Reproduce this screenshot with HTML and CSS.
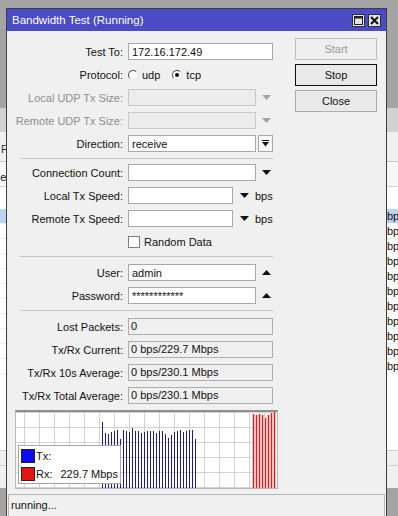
FILE: index.html
```html
<!DOCTYPE html>
<html lang="en">
<head>
  <meta charset="UTF-8">
  <meta name="viewport" content="width=device-width, initial-scale=1.0">
  <title>Bandwidth Test</title>
  <link rel="stylesheet" href="styles.css">
</head>
<body>
  <!-- window behind the dialog -->
  <div class="bg-window">
    <div class="bg-toolbar"></div>
    <div class="bg-tabs">F</div>
    <div class="bg-head"><span>Sec</span></div>
    <div class="bg-list">
      <div class="bg-row selected"><span></span><span>bps</span></div>
      <div class="bg-row"><span></span><span>bps</span></div>
      <div class="bg-row"><span></span><span>bps</span></div>
      <div class="bg-row"><span></span><span>bps</span></div>
      <div class="bg-row"><span></span><span>bps</span></div>
      <div class="bg-row"><span></span><span>bps</span></div>
      <div class="bg-row"><span></span><span>bps</span></div>
      <div class="bg-row"><span></span><span>bps</span></div>
      <div class="bg-row"><span></span><span>bps</span></div>
      <div class="bg-row"><span></span><span>bps</span></div>
      <div class="bg-row"><span></span><span>bps</span></div>
    </div>
    <div class="bg-foot"></div>
    <div class="bg-foot"></div>
  </div>

  <div class="dialog">
    <div class="titlebar">
      <span class="title">Bandwidth Test (Running)</span>
      <span class="title-btn">
        <svg width="9" height="9" viewBox="0 0 9 9"><rect x="0.5" y="0.5" width="8" height="8" fill="none" stroke="#222"/><path d="M0 1.5h9" stroke="#222" stroke-width="2"/></svg>
      </span>
      <span class="title-btn">
        <svg width="9" height="9" viewBox="0 0 9 9"><path d="M1 1l7 7M8 1l-7 7" stroke="#111" stroke-width="2"/></svg>
      </span>
    </div>

    <div class="dialog-body">
      <div class="form">
        <div class="row">
          <label class="label" for="testTo">Test To:</label>
          <input class="field w-full" id="testTo" type="text" value="172.16.172.49">
        </div>
        <div class="row">
          <span class="label">Protocol:</span>
          <span class="radio"></span><span class="opt">udp</span>
          <span class="radio on"></span><span class="opt">tcp</span>
        </div>
        <div class="row disabled">
          <span class="label">Local UDP Tx Size:</span>
          <input class="field w-mid" type="text" disabled>
          <span class="caret muted"></span>
        </div>
        <div class="row disabled">
          <span class="label">Remote UDP Tx Size:</span>
          <input class="field w-mid" type="text" disabled>
          <span class="caret muted"></span>
        </div>
        <div class="row">
          <label class="label" for="direction">Direction:</label>
          <input class="field w-mid" id="direction" type="text" value="receive">
          <span class="drop">
            <svg width="7" height="7" viewBox="0 0 7 7"><path d="M0 0.5h7" stroke="#111"/><path d="M0 2h7L3.5 6.5z" fill="#111"/></svg>
          </span>
        </div>

        <div class="sep top"></div>

        <div class="row">
          <label class="label" for="connCount">Connection Count:</label>
          <input class="field w-mid" id="connCount" type="text">
          <span class="caret"></span>
        </div>
        <div class="row">
          <label class="label" for="localSpeed">Local Tx Speed:</label>
          <input class="field w-short" id="localSpeed" type="text">
          <span class="caret"></span>
          <span class="unit">bps</span>
        </div>
        <div class="row">
          <label class="label" for="remoteSpeed">Remote Tx Speed:</label>
          <input class="field w-short" id="remoteSpeed" type="text">
          <span class="caret"></span>
          <span class="unit">bps</span>
        </div>
        <div class="row">
          <span class="label"></span>
          <span class="check"></span>
          <span>Random Data</span>
        </div>

        <div class="sep"></div>

        <div class="row">
          <label class="label" for="user">User:</label>
          <input class="field w-mid" id="user" type="text" value="admin">
          <span class="caret up"></span>
        </div>
        <div class="row">
          <label class="label" for="password">Password:</label>
          <input class="field w-mid" id="password" type="text" value="************">
          <span class="caret up"></span>
        </div>

        <div class="sep"></div>

        <div class="row">
          <span class="label">Lost Packets:</span>
          <div class="value">0</div>
        </div>
        <div class="row">
          <span class="label">Tx/Rx Current:</span>
          <div class="value">0 bps/229.7 Mbps</div>
        </div>
        <div class="row">
          <span class="label">Tx/Rx 10s Average:</span>
          <div class="value">0 bps/230.1 Mbps</div>
        </div>
        <div class="row">
          <span class="label">Tx/Rx Total Average:</span>
          <div class="value">0 bps/230.1 Mbps</div>
        </div>
      </div>

      <div class="actions">
        <button disabled>Start</button>
        <button class="default">Stop</button>
        <button>Close</button>
      </div>
    </div>

    <div class="graph">
      <svg class="plot" width="261" height="76" viewBox="0 0 261 76">
        <path stroke="#1c1c82" stroke-width="1" d="M86.5 10V76M89.5 21V76M92.5 22V76M95.5 20V76M98.5 19V76M101.5 18V76M104.5 27V76M107.5 18V76M110.5 19V76M113.5 20V76M116.5 16V76M119.5 19V76M122.5 19V76M125.5 21V76M128.5 20V76M131.5 19V76M134.5 19V76M137.5 19V76M140.5 21V76M143.5 19V76M146.5 19V76M149.5 22V76M152.5 26V76M155.5 23V76M158.5 20V76M161.5 19V76M164.5 18V76M167.5 20V76M170.5 19V76M173.5 18V76M176.5 18V76M179.5 27V76"/>
        <path stroke="#f4c0c0" stroke-width="3" d="M237.5 2V76M240.5 3V76M243.5 2V76M246.5 3V76M249.5 6V76M252.5 3V76M255.5 1V76M258.5 0V76"/>
        <path stroke="#cf2424" stroke-width="1" d="M237.5 2V76M240.5 3V76M243.5 2V76M246.5 3V76M249.5 6V76M252.5 3V76M255.5 1V76M258.5 0V76"/>
      </svg>
      <div class="legend">
        <div class="legend-row"><span class="swatch tx"></span>Tx:</div>
        <div class="legend-row"><span class="swatch rx"></span>Rx:<span class="legend-value">229.7 Mbps</span></div>
      </div>
    </div>

    <div class="status">running...</div>
  </div>
</body>
</html>
```

FILE: styles.css
```css
* {
  box-sizing: border-box;
}
body {
  margin: 0;
  width: 398px;
  height: 516px;
  overflow: hidden;
  position: relative;
  background: #a4a4a4;
  font-family: "Liberation Sans", Arial, sans-serif;
  font-size: 11px;
  color: #111;
}

/* window in the background */
.bg-window {
  position: absolute;
  left: 0;
  top: 108px;
  width: 398px;
  height: 380px;
  background: #f0f0f0;
}
.bg-toolbar {
  height: 24px;
  background: #d2d2d2;
}
.bg-tabs {
  height: 30px;
  padding: 11px 0 0 1px;
  line-height: 13px;
  color: #333;
  border-bottom: 1px solid #c6c6c6;
}
.bg-head {
  height: 25px;
  padding-top: 9px;
  line-height: 13px;
  background: #f7f7f7;
  border-bottom: 1px solid #d4d4d4;
}
.bg-head span {
  margin-left: -7px;
}
.bg-list {
  height: 263px;
  padding-top: 22px;
  background: #fff;
}
.bg-row {
  display: grid;
  grid-template-columns: 387px 1fr;
  height: 15px;
  line-height: 14px;
  border-bottom: 1px solid #efefef;
}
.bg-row.selected {
  background: #bcd3f1;
}
.bg-foot {
  height: 15px;
  border-top: 1px solid #cfcfcf;
}
.bg-foot + .bg-foot {
  height: 23px;
}

/* dialog */
.dialog {
  position: absolute;
  left: 6px;
  top: 8px;
  width: 381px;
  height: 520px;
  background: #f0f0f0;
  border: 1px solid #3c3c3c;
}
.titlebar {
  display: flex;
  align-items: center;
  gap: 3px;
  height: 22px;
  padding: 0 5px;
  background: #4b4bc5;
  color: #fff;
  font-size: 11.5px;
}
.title {
  flex: 1;
}
.title-btn {
  display: flex;
  align-items: center;
  justify-content: center;
  width: 13px;
  height: 13px;
  background: #e4e4e4;
  border: 1px solid #2e2e2e;
}
.dialog-body {
  display: flex;
  padding-top: 7px;
}
.form {
  width: 266px;
  padding-top: 5px;
}
.row {
  display: flex;
  align-items: center;
  height: 17px;
  margin-bottom: 6px;
}
.label {
  flex: none;
  width: 116px;
  margin-right: 5px;
  text-align: right;
  white-space: nowrap;
}
.row.disabled .label {
  color: #8d8d8d;
}
.field {
  height: 17px;
  margin: 0;
  padding: 0 3px;
  border: 1px solid #a8a8a8;
  border-radius: 0;
  background: #fff;
  font: inherit;
  color: #111;
  outline: none;
}
.field:disabled {
  background: #ededed;
  border-color: #c9c9c9;
}
.w-full {
  width: 145px;
}
.w-mid {
  width: 128px;
}
.w-short {
  width: 105px;
}
.value {
  width: 145px;
  height: 17px;
  padding: 0 2px;
  line-height: 15px;
  border: 1px solid #aeaeae;
}
.caret {
  width: 9px;
  height: 5px;
  margin-left: 6px;
  background: #111;
  clip-path: polygon(0 0, 100% 0, 50% 100%);
}
.caret.up {
  clip-path: polygon(50% 0, 100% 100%, 0 100%);
}
.caret.muted {
  background: #a3a3a3;
}
.w-short + .caret {
  margin-left: 7px;
}
.unit {
  margin-left: 6px;
}
.drop {
  display: flex;
  align-items: center;
  justify-content: center;
  width: 15px;
  height: 17px;
  margin-left: 2px;
  border: 1px solid #a8a8a8;
  background: #f7f7f7;
}
.radio {
  display: flex;
  align-items: center;
  justify-content: center;
  width: 10px;
  height: 10px;
  border: 1px solid;
  border-color: #4a4a4a #e8e8e8 #e8e8e8 #4a4a4a;
  border-radius: 50%;
  background: #fff;
}
.radio.on::after {
  content: "";
  width: 4px;
  height: 4px;
  border-radius: 50%;
  background: #111;
}
.opt {
  margin-left: 4px;
}
.opt + .radio {
  margin-left: 12px;
}
.check {
  width: 12px;
  height: 12px;
  margin-right: 4px;
  border: 1px solid #7f7f7f;
  background: #fff;
}
.sep {
  height: 1px;
  margin: 0 0 7px 13px;
  background: #c4c4c4;
}
.sep.top {
  margin: 3px 0 5px 13px;
}
.actions {
  display: flex;
  flex-direction: column;
  gap: 4px;
  margin-left: 22px;
}
.actions button {
  width: 82px;
  height: 22px;
  padding: 0;
  border: 1px solid #acacac;
  background: #e9e9e9;
  font: inherit;
  color: #111;
}
.actions button:disabled {
  color: #9a9a9a;
  background: #efefef;
  border-color: #bdbdbd;
}
.actions button.default {
  border-color: #111;
}

/* traffic graph */
.graph {
  position: relative;
  width: 263px;
  height: 79px;
  margin-left: 8px;
  border: 1px solid #b9b9b9;
  border-top: 2px solid #8e8e8e;
  background-color: #fff;
  background-image: linear-gradient(90deg, #d2d2d2 1px, transparent 1px), linear-gradient(#d2d2d2 1px, transparent 1px);
  background-size: 15px 15px;
  background-position: 8px 0;
}
.plot {
  display: block;
}
.legend {
  position: absolute;
  left: 2px;
  top: 33px;
  width: 103px;
  padding: 3px 2px 2px;
  border: 1px solid #a5a5a5;
  background: #fff;
  white-space: nowrap;
}
.legend-row {
  display: flex;
  align-items: center;
  height: 14px;
}
.legend-row + .legend-row {
  margin-top: 4px;
}
.swatch {
  width: 14px;
  height: 14px;
  margin-right: 1px;
  border: 1px solid #222;
}
.swatch.tx {
  background: #0b0bf5;
}
.swatch.rx {
  background: #e41414;
}
.legend-value {
  margin-left: 8px;
}
.status {
  height: 24px;
  margin: 5px 1px 0;
  padding: 4px 2px 0;
  line-height: 13px;
  border: 1px solid #b6b6b6;
  border-bottom: none;
}
```
